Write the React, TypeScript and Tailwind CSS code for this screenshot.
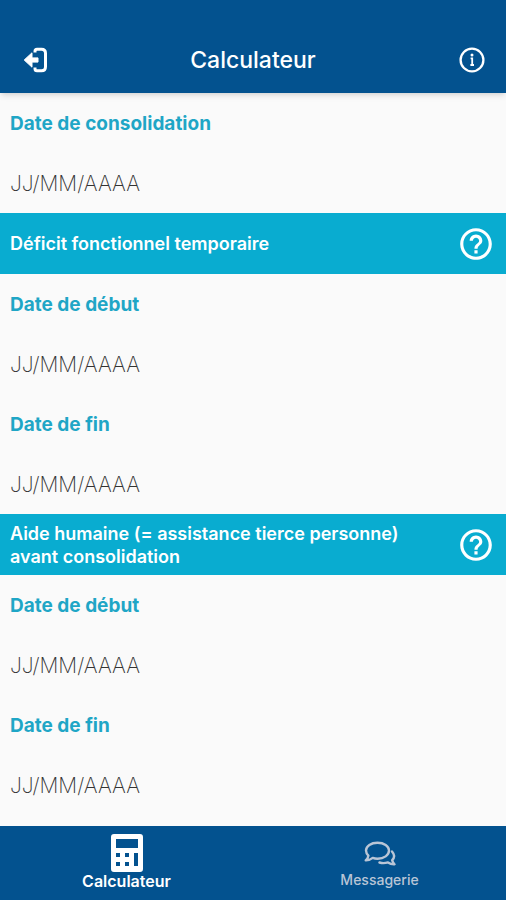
import { useState } from 'react';

const firstFields = [{ id: 'consolidation', label: 'Date de consolidation' }];

const sections = [
  {
    id: 'deficit',
    title: 'Déficit fonctionnel temporaire',
    fields: [
      { id: 'deficit-debut', label: 'Date de début' },
      { id: 'deficit-fin', label: 'Date de fin' },
    ],
  },
  {
    id: 'aide',
    title: 'Aide humaine (= assistance tierce personne) avant consolidation',
    fields: [
      { id: 'aide-debut', label: 'Date de début' },
      { id: 'aide-fin', label: 'Date de fin' },
    ],
  },
];

function LogoutIcon() {
  return (
    <svg viewBox="0 0 24 26" className="w-6 h-[26px]" fill="none" aria-hidden="true">
      <path
        d="M12 5.500V4.200Q12 2.200 14 2.200H18.500Q22.500 2.200 22.500 6.200V19.800Q22.500 23.800 18.500 23.800H14Q12 23.800 12 21.800V20.500"
        stroke="currentColor"
        strokeWidth="3"
      />
      <path
        d="M1.200 13L9 5.800V10.900H15V15.100H9V20.200Z"
        fill="currentColor"
        stroke="currentColor"
        strokeLinejoin="round"
      />
    </svg>
  );
}

function InfoIcon() {
  return (
    <svg viewBox="0 0 26 26" className="size-[26px]" fill="none" aria-hidden="true">
      <circle cx="13" cy="13" r="11.4" stroke="currentColor" strokeWidth="2.3" />
      <path d="M11.600 11.300H13.200V18M11.400 18H15" stroke="currentColor" strokeWidth="1.8" />
      <circle cx="13" cy="8" r="1.5" fill="currentColor" />
    </svg>
  );
}

function HelpIcon() {
  return (
    <svg viewBox="0 0 24 24" className="size-[38px]" fill="currentColor" aria-hidden="true">
      <path d="M11 18h2v-2h-2v2zm1-16C6.48 2 2 6.48 2 12s4.480 10 10 10 10-4.480 10-10S17.520 2 12 2zm0 18c-4.410 0-8-3.590-8-8s3.590-8 8-8 8 3.590 8 8-3.590 8-8 8zm0-14c-2.210 0-4 1.790-4 4h2c0-1.100.9-2 2-2s2 .9 2 2c0 2-3 1.750-3 5h2c0-2.250 3-2.500 3-5 0-2.210-1.790-4-4-4z" />
    </svg>
  );
}

function CalculatorIcon() {
  return (
    <svg viewBox="0 0 32 38" className="w-8 h-[38px]" aria-hidden="true">
      <path
        fill="currentColor"
        fillRule="evenodd"
        d="M3 0H29Q32 0 32 3V35Q32 38 29 38H3Q0 38 0 35V3Q0 0 3 0ZM5 5V14H27V5ZM5 19V23H9V19ZM14 19V23H18V19ZM23 19V32H27V19ZM5 28V32H9V28ZM14 28V32H18V28Z"
      />
    </svg>
  );
}

function ChatIcon() {
  return (
    <svg
      viewBox="0 0 32 26"
      className="w-8 h-[26px]"
      fill="none"
      stroke="currentColor"
      strokeWidth="2.4"
      strokeLinecap="round"
      strokeLinejoin="round"
      aria-hidden="true"
    >
      <path d="M4.400 14.600C2.600 12.800 2 11.200 2 9.600C2 5 7 1.700 13.500 1.700S25 5 25 9.600S20 17.700 13.500 17.700C11.700 17.700 10.100 17.400 8.700 16.900C6.700 18.500 4.500 19.500 1.700 19.400C3.200 18 4.200 16.400 4.400 14.600Z" />
      <path d="M28 10.500C30.800 13.600 30.500 16.800 28.200 19.200C28.500 20.800 29.300 22.200 30.500 23.300C27.900 23.500 25.700 22.600 24 21.400C20.600 22.500 17.500 22.200 15.500 21.500" />
    </svg>
  );
}

function DateField({ id, label }: { id: string; label: string }) {
  return (
    <div className="flex flex-col">
      <label htmlFor={id} className="h-15 px-[10px] leading-[62px] text-[19px] font-bold text-[#1fa6c6]">
        {label}
      </label>
      <input
        id={id}
        type="text"
        inputMode="numeric"
        placeholder="JJ/MM/AAAA"
        className="h-15 w-full px-[10px] bg-transparent text-[21px] font-extralight text-[#222] placeholder:text-[#333] outline-none"
      />
    </div>
  );
}

export default function App() {
  const [tab, setTab] = useState('calculateur');

  return (
    <div className="min-h-screen flex flex-col bg-[#fafafa] font-['Inter','Liberation_Sans',sans-serif]">
      <header className="flex items-center justify-between bg-[#03528f] text-white pt-[27px] pl-[23px] pr-[21px] shadow-md">
        <button aria-label="Quitter" className="h-16">
          <LogoutIcon />
        </button>
        <h1 className="text-[23px] leading-[66px] font-medium">Calculateur</h1>
        <button aria-label="Informations" className="h-16">
          <InfoIcon />
        </button>
      </header>

      <main className="flex-1 pb-[11px]">
        {firstFields.map((field) => (
          <DateField key={field.id} {...field} />
        ))}

        {sections.map((section) => (
          <section key={section.id}>
            <div className="flex items-center justify-between min-h-[61px] pl-[10px] pr-[11px] bg-[#09acd0] text-white">
              <h2 className="max-w-[410px] text-lg leading-[23px] font-semibold">{section.title}</h2>
              <button aria-label={`Aide : ${section.title}`}>
                <HelpIcon />
              </button>
            </div>
            {section.fields.map((field) => (
              <DateField key={field.id} {...field} />
            ))}
          </section>
        ))}
      </main>

      {/* Bottom tabs */}
      <nav className="grid grid-cols-2 h-[74px] bg-[#03528f]">
        <button
          onClick={() => setTab('calculateur')}
          aria-current={tab === 'calculateur' ? 'page' : undefined}
          className="flex flex-col items-center pt-2 text-white"
        >
          <CalculatorIcon />
          <span className="text-base leading-[18px] font-semibold">Calculateur</span>
        </button>
        <button
          onClick={() => setTab('messagerie')}
          aria-current={tab === 'messagerie' ? 'page' : undefined}
          className="flex flex-col items-center gap-1 pt-[15px] text-[#b9c5d6]"
        >
          <ChatIcon />
          <span className="text-sm leading-[18px] font-medium">Messagerie</span>
        </button>
      </nav>
    </div>
  );
}
